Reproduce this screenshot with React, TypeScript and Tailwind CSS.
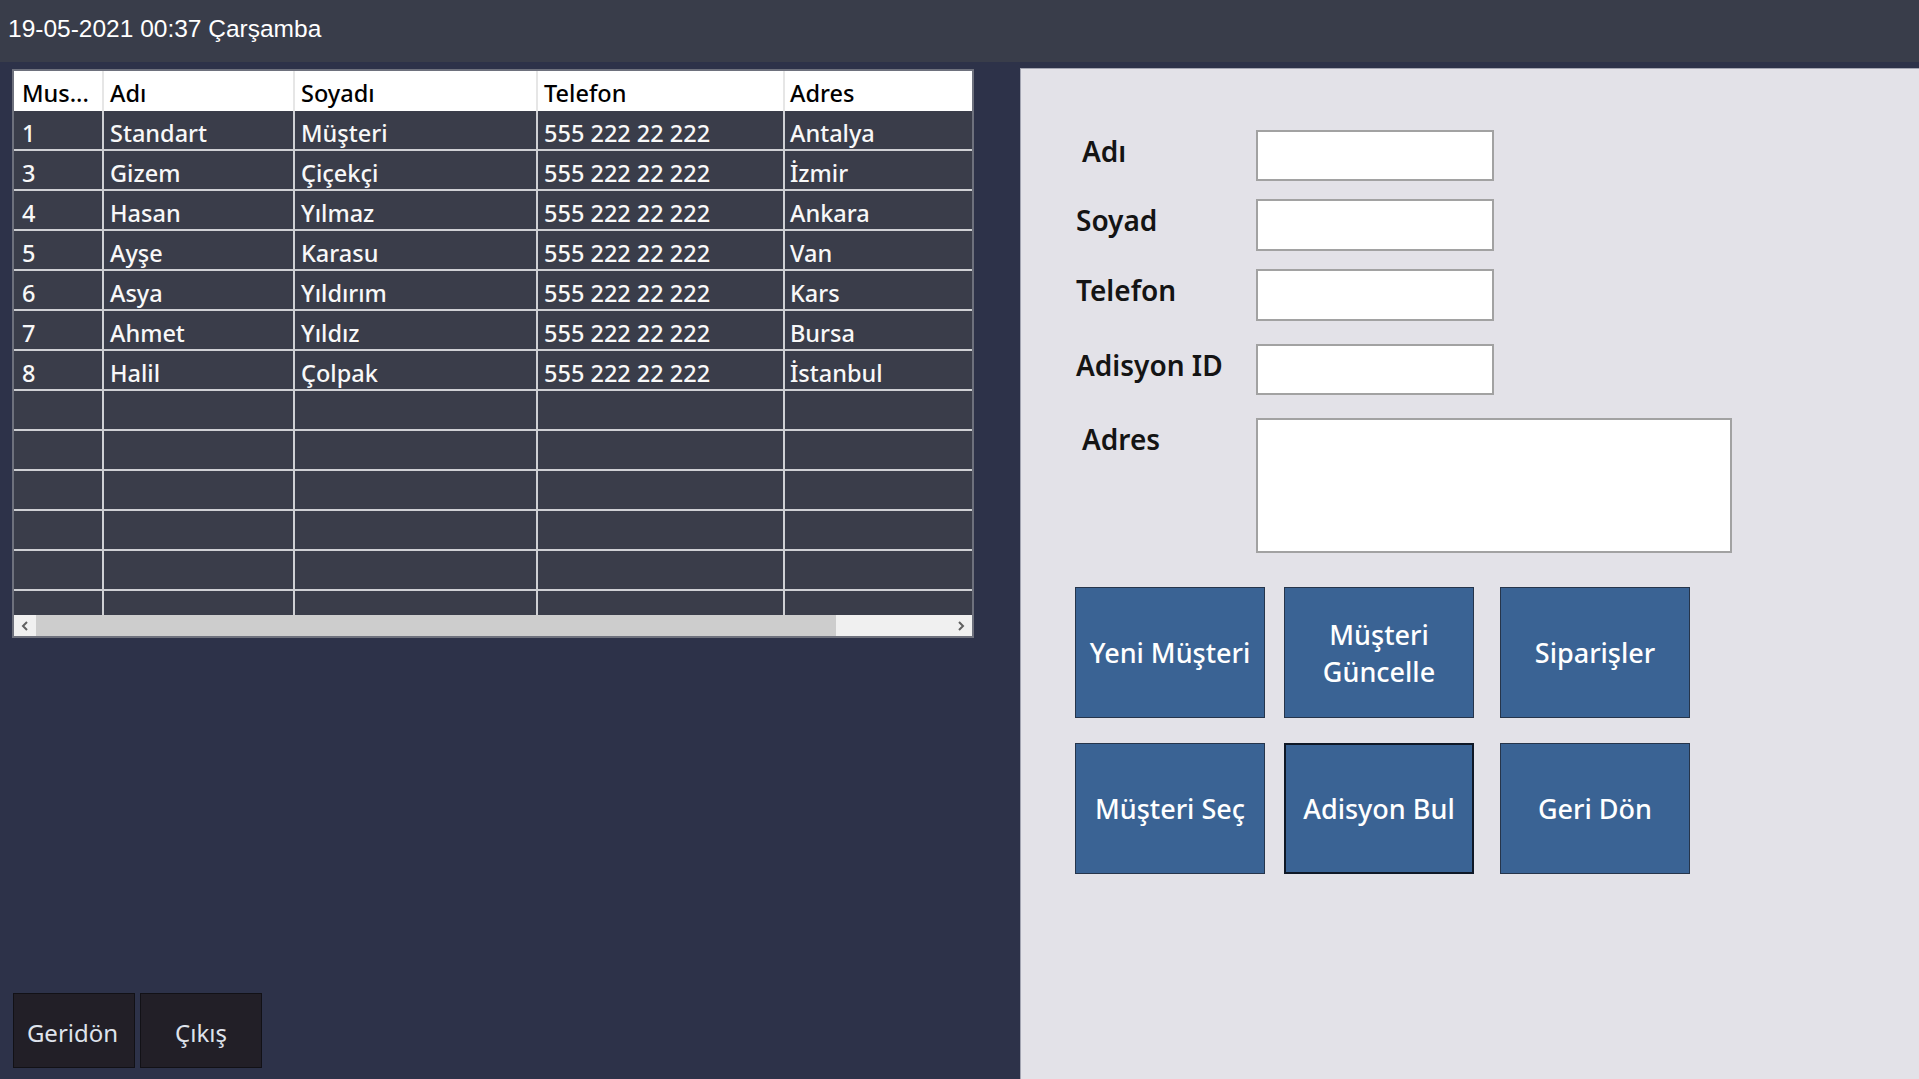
import React from "react";

const rows: string[][] = [
  ["1", "Standart", "Müşteri", "555 222 22 222", "Antalya"],
  ["3", "Gizem", "Çiçekçi", "555 222 22 222", "İzmir"],
  ["4", "Hasan", "Yılmaz", "555 222 22 222", "Ankara"],
  ["5", "Ayşe", "Karasu", "555 222 22 222", "Van"],
  ["6", "Asya", "Yıldırım", "555 222 22 222", "Kars"],
  ["7", "Ahmet", "Yıldız", "555 222 22 222", "Bursa"],
  ["8", "Halil", "Çolpak", "555 222 22 222", "İstanbul"],
  ["", "", "", "", ""],
  ["", "", "", "", ""],
  ["", "", "", "", ""],
  ["", "", "", "", ""],
  ["", "", "", "", ""],
];

const headers = ["Mus...", "Adı", "Soyadı", "Telefon", "Adres"];
const widths = ["w-[90px]", "w-[191px]", "w-[243px]", "w-[247px]", "flex-1"];
const pads = ["pl-[8px]", "pl-[6px]", "pl-[6px]", "pl-[6px]", "pl-[5px]"];

const font = { fontFamily: '"Noto Sans", "Open Sans", sans-serif' };

function ActionButton({ label, focused }: { label: React.ReactNode; focused?: boolean }) {
  return (
    <div
      className={`w-[190px] h-[131px] bg-[#3a6394] flex items-center justify-center text-center text-white text-[27px] leading-[37px] font-medium ${
        focused ? "border-2 border-[#0f1826]" : "border border-[#26354b]"
      }`}
    >
      {label}
    </div>
  );
}

function FormRow({ label, className, labelClass }: { label: string; className: string; labelClass?: string }) {
  return (
    <div className={`flex items-center ${className}`}>
      <div className={`w-[181px] text-[28px] font-semibold text-[#141414] ${labelClass ?? ""}`}>{label}</div>
      <input readOnly className="w-[238px] h-full bg-white border-2 border-[#a2a2a2] outline-none" />
    </div>
  );
}

export default function App() {
  return (
    <div className="w-[1919px] h-[1079px] flex flex-col bg-[#2d3249] overflow-hidden" style={font}>
      <div className="h-[62px] bg-[#393d4a] flex items-center pl-[8px] pb-[3px]">
        <span className="text-[24.5px] text-white" style={{ fontFamily: '"Liberation Sans", Arial, sans-serif' }}>
          19-05-2021 00:37 Çarşamba
        </span>
      </div>
      <div className="flex-1 flex">
        <div className="w-[1020px] flex flex-col">
          <div className="mt-[7px] ml-[12px] w-[962px] border-2 border-[#6e717d] bg-[#3a3d4a] flex flex-col">
            <div className="flex h-[40px] bg-white">
              {headers.map((h, i) => (
                <div
                  key={i}
                  className={`${widths[i]} ${pads[i]} h-full flex items-center pt-[6px] text-[23.5px] font-medium text-black ${
                    i < 4 ? "border-r-2 border-[#e6e6e6]" : ""
                  }`}
                >
                  {h}
                </div>
              ))}
            </div>
            {rows.map((r, ri) => (
              <div key={ri} className="flex h-[40px] border-b-2 border-[#cfd0d4]">
                {r.map((c, i) => (
                  <div
                    key={i}
                    className={`${widths[i]} ${pads[i]} h-full flex items-center pt-[7px] text-[23.5px] font-medium text-[#f8f8f8] ${
                      i < 4 ? "border-r-2 border-[#cfd0d4]" : ""
                    }`}
                  >
                    {c}
                  </div>
                ))}
              </div>
            ))}
            <div className="flex h-[24px]">
              {widths.map((w, i) => (
                <div key={i} className={`${w} h-full ${i < 4 ? "border-r-2 border-[#cfd0d4]" : ""}`} />
              ))}
            </div>
            <div className="flex h-[21px] bg-[#f0f0f0]">
              <div className="w-[22px] h-full flex items-center justify-center">
                <svg width="8" height="10" viewBox="0 0 8 10">
                  <path d="M6 1 L2 5 L6 9" stroke="#606060" strokeWidth="2" fill="none" />
                </svg>
              </div>
              <div className="w-[800px] h-full bg-[#cdcdcd]" />
              <div className="flex-1" />
              <div className="w-[22px] h-full flex items-center justify-center">
                <svg width="8" height="10" viewBox="0 0 8 10">
                  <path d="M2 1 L6 5 L2 9" stroke="#606060" strokeWidth="2" fill="none" />
                </svg>
              </div>
            </div>
          </div>
          <div className="mt-auto mb-[11px] ml-[13px] flex gap-[5px]">
            <div className="w-[122px] h-[75px] bg-[#221f27] border border-[#121116] flex items-center justify-center pt-[5px] pr-[3px] text-[24px] text-[#dfe3ec]">
              Geridön
            </div>
            <div className="w-[122px] h-[75px] bg-[#221f27] border border-[#121116] flex items-center justify-center pt-[5px] text-[24px] text-[#dfe3ec]">
              Çıkış
            </div>
          </div>
        </div>
        <div className="flex-1 mt-[6px] bg-[#e3e2e8] border-l border-t border-[#a3a5b2] pl-[54px] pt-[61px] flex flex-col">
          <FormRow label="Adı" className="h-[51px]" labelClass="pl-[7px] -mt-[9px]" />
          <FormRow label="Soyad" className="h-[52px] mt-[18px]" labelClass="pl-[1px] -mt-[11px]" />
          <FormRow label="Telefon" className="h-[52px] mt-[18px]" labelClass="pl-[1px] -mt-[11px]" />
          <FormRow label="Adisyon ID" className="h-[51px] mt-[23px]" labelClass="pl-[1px] -mt-[9px]" />
          <div className="flex items-start mt-[23px]">
            <div className="w-[181px] pl-[7px] text-[28px] font-semibold text-[#141414]">Adres</div>
            <textarea readOnly className="w-[476px] h-[135px] bg-white border-2 border-[#a2a2a2] outline-none resize-none" />
          </div>
          <div className="flex mt-[34px]">
            <ActionButton label="Yeni Müşteri" />
            <div className="ml-[19px]">
              <ActionButton label={<span>Müşteri<br />Güncelle</span>} />
            </div>
            <div className="ml-[26px]">
              <ActionButton label="Siparişler" />
            </div>
          </div>
          <div className="flex mt-[25px]">
            <ActionButton label="Müşteri Seç" />
            <div className="ml-[19px]">
              <ActionButton label="Adisyon Bul" focused />
            </div>
            <div className="ml-[26px]">
              <ActionButton label="Geri Dön" />
            </div>
          </div>
        </div>
      </div>
    </div>
  );
}
